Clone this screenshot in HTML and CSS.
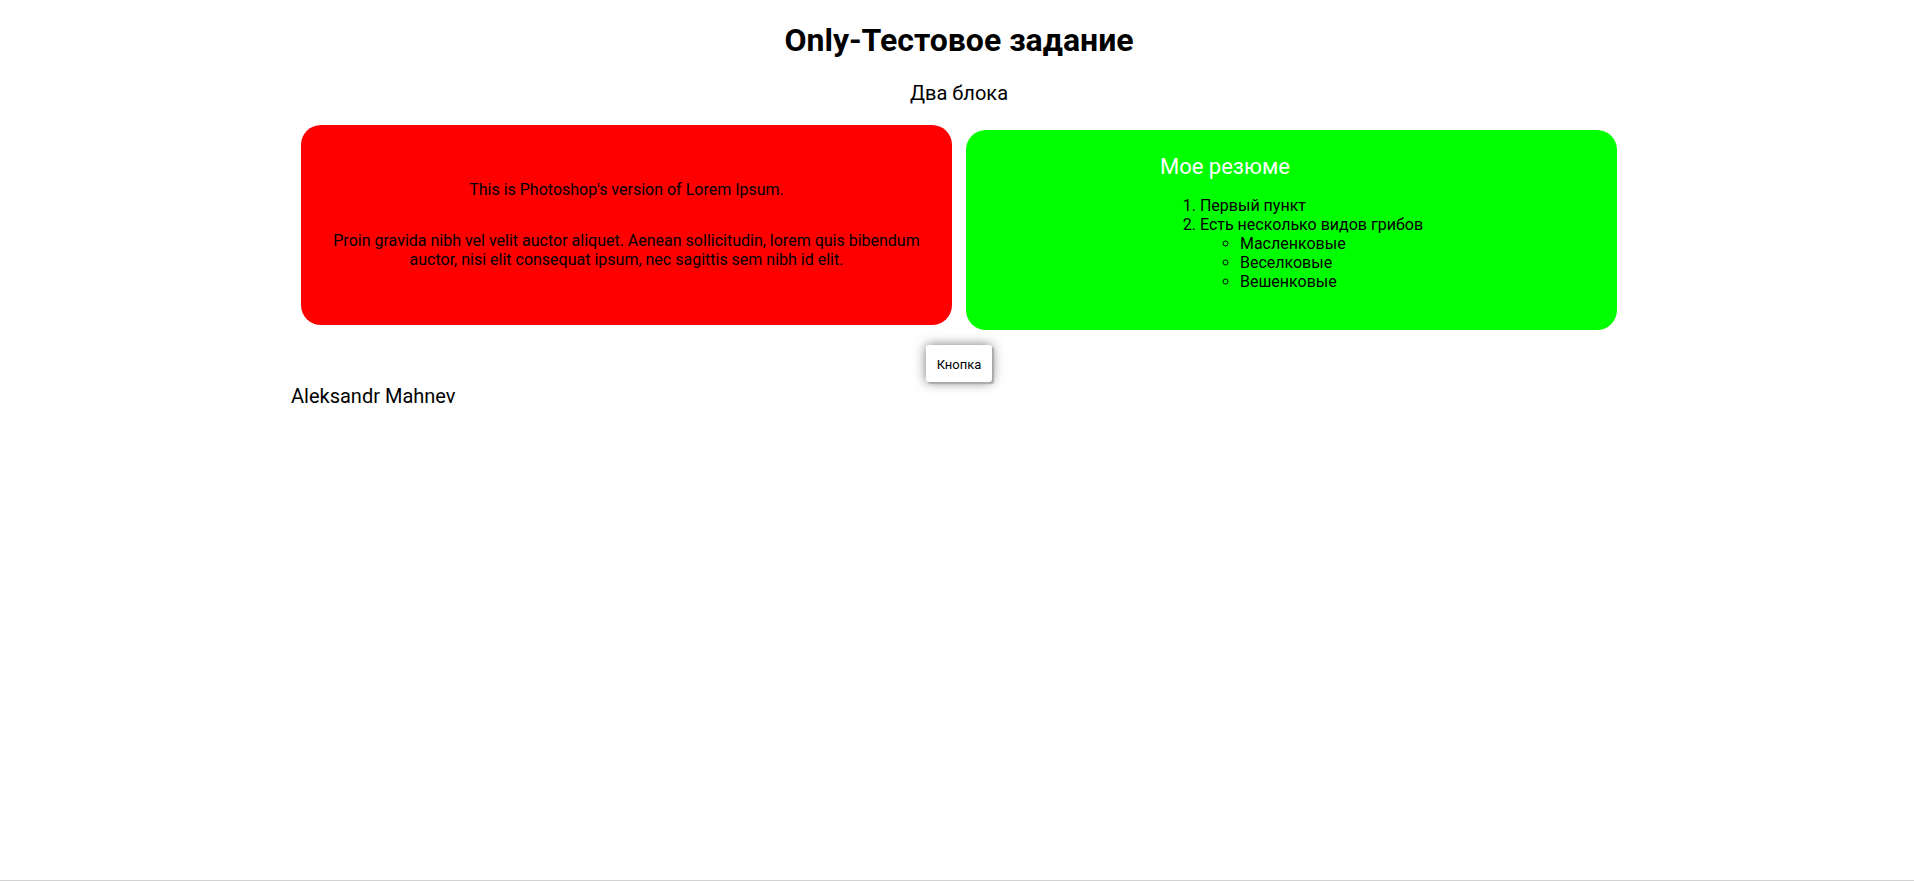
FILE: index.html
```html
<!DOCTYPE html>
<html lang="ru">
<head>
  <meta charset="utf-8">
  <meta name="viewport" content="width=device-width, initial-scale=1">
  <title>Only-Тестовое задание</title>
  <link rel="stylesheet" href="styles.css">
</head>
<body class="page">
  <div class="container">
    <header class="header">
      <h1 class="title">Only-Тестовое задание</h1>
      <p class="subtitle">Два блока</p>
    </header>
    <main class="main">
      <div class="blocks">
        <section class="block block-red">
          <p class="text">This is Photoshop's version of Lorem Ipsum.</p>
          <p class="text">Proin gravida nibh vel velit auctor aliquet. Aenean sollicitudin, lorem quis bibendum auctor, nisi elit consequat ipsum, nec sagittis sem nibh id elit.</p>
        </section>
        <section class="block block-green">
          <div class="resume">
            <h2 class="resume-title">Мое резюме</h2>
            <ol class="list">
              <li>Первый пункт</li>
              <li>Есть несколько видов грибов
                <ul class="sublist">
                  <li>Масленковые</li>
                  <li>Веселковые</li>
                  <li>Вешенковые</li>
                </ul>
              </li>
            </ol>
          </div>
        </section>
      </div>
      <button class="button" type="button">Кнопка</button>
    </main>
    <footer class="footer">Aleksandr Mahnev</footer>
  </div>
  <hr class="line">
</body>
</html>
```

FILE: styles.css
```css
* {
  box-sizing: border-box;
}

.page {
  display: flex;
  flex-direction: column;
  min-height: 100vh;
  margin: 0;
  padding-bottom: 1px;
  background: #fff;
  color: #000;
  font-family: Roboto, "Noto Sans", sans-serif;
  font-size: 16px;
  line-height: 19px;
}

.container {
  flex: 1;
  width: 100%;
  max-width: 1340px;
  margin: 0 auto;
  padding: 21px 0 0 4px;
}

.header {
  text-align: center;
}

.title {
  margin: 0 0 22px;
  font-size: 32px;
  font-weight: 700;
  line-height: 38px;
}

.subtitle {
  margin: 0 0 20px;
  font-size: 20px;
  line-height: 24px;
}

.main {
  display: flex;
  flex-direction: column;
  align-items: center;
}

.blocks {
  display: grid;
  grid-template-columns: 1fr 1fr;
  gap: 14px;
  width: 100%;
  padding: 0 10px;
}

.block {
  display: flex;
  flex-direction: column;
  align-items: center;
  justify-content: center;
  min-height: 200px;
  padding: 0 20px;
  border-radius: 20px;
}

.block-red {
  gap: 32px;
  margin-bottom: 5px;
  padding-bottom: 1px;
  background: #f00;
  text-align: center;
}

.block-green {
  margin-top: 5px;
  background: #0f0;
}

.text {
  margin: 0;
}

.resume-title {
  margin: 0;
  color: #fff;
  font-size: 22px;
  font-weight: 400;
  line-height: 26px;
}

.list {
  margin: 16px 0;
  padding-left: 40px;
}

.sublist {
  margin: 0;
  padding-left: 40px;
}

.button {
  margin-top: 15px;
  padding: 12px 11px 10px;
  border: 0;
  border-radius: 3px;
  background: #fff;
  box-shadow: 2px 2px 1px #aaa, 0 0 12px #777;
  color: #000;
  font-family: inherit;
  font-size: 13px;
  line-height: 15px;
}

.footer {
  margin-top: 2px;
  font-size: 20px;
  line-height: 24px;
}

.line {
  width: 100%;
  margin: 0;
  border: 0;
  border-top: 1px solid #d3d3d3;
}
```
